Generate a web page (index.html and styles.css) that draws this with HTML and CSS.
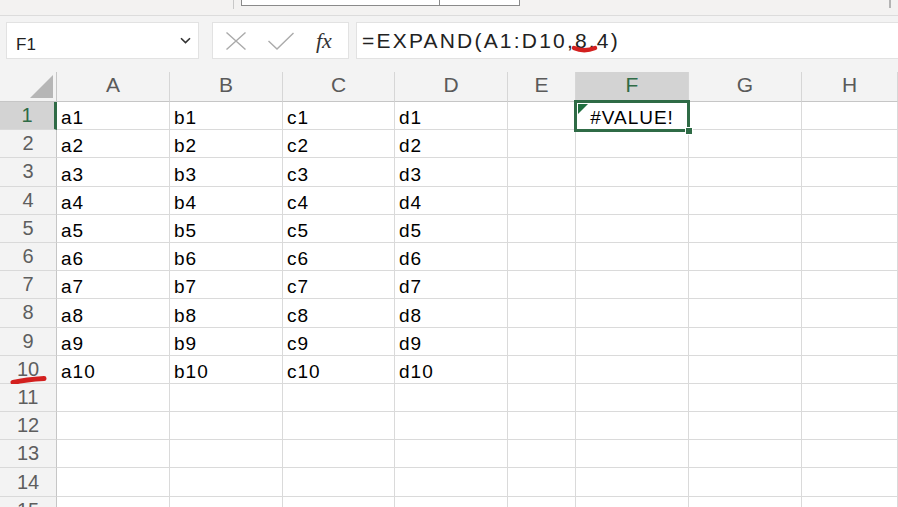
FILE: index.html
```html
<!DOCTYPE html>
<html lang="ja">
<head>
    <meta charset="UTF-8">
    <meta name="viewport" content="width=device-width, initial-scale=1.0">
    <title>EXPAND - Book1</title>
    <link rel="stylesheet" href="styles.css">
</head>
<body>
    <!-- リボン下端 -->
    <div class="strip">
        <div class="strip-sep"></div>
        <div class="search-box"><div class="search-left"></div></div>
        <div class="strip-end"></div>
    </div>

    <!-- 数式バー -->
    <div class="formula-bar">
        <div class="name-box">
            <span>F1</span>
            <svg class="chevron" width="11" height="7" viewBox="0 0 11 7"><path d="M1 1.2 L5.5 5.6 L10 1.2" fill="none" stroke="#333" stroke-width="1.6"/></svg>
        </div>
        <div class="fx-box">
            <svg class="icon-x" width="20" height="18" viewBox="0 0 20 18"><path d="M0.5 0.5 L19.5 17.5 M19.5 0.5 L0.5 17.5" stroke="#ababab" stroke-width="1.4" fill="none"/></svg>
            <svg class="icon-check" width="26" height="18" viewBox="0 0 26 18"><path d="M0.5 9 L9 17 L25.5 1" stroke="#ababab" stroke-width="1.4" fill="none"/></svg>
            <span class="fx">fx</span>
        </div>
        <div class="formula">=EXPAND(A1:D10,<span class="mark">8<svg class="pen" width="28" height="10" viewBox="0 0 28 10"><path d="M3 3 Q 13 7.5 24 3" stroke="#d3201f" stroke-width="4.5" stroke-linecap="round" fill="none"/></svg></span>,4)</div>
    </div>

    <!-- シート -->
    <div class="sheet">
        <div class="row head">
            <div class="corner"><span class="tri"></span></div>
            <div class="col-head">A</div>
            <div class="col-head">B</div>
            <div class="col-head">C</div>
            <div class="col-head">D</div>
            <div class="col-head">E</div>
            <div class="col-head active">F</div>
            <div class="col-head">G</div>
            <div class="col-head">H</div>
        </div>
        <div class="row">
            <div class="row-head active">1</div>
            <div class="cell">a1</div><div class="cell">b1</div><div class="cell">c1</div><div class="cell">d1</div>
            <div class="cell"></div>
            <div class="cell error">
                <span class="err-tri"></span>#VALUE!
                <div class="selection"><span class="handle"></span></div>
            </div>
            <div class="cell"></div><div class="cell"></div>
        </div>
        <div class="row">
            <div class="row-head">2</div>
            <div class="cell">a2</div><div class="cell">b2</div><div class="cell">c2</div><div class="cell">d2</div>
            <div class="cell"></div><div class="cell"></div><div class="cell"></div><div class="cell"></div>
        </div>
        <div class="row">
            <div class="row-head">3</div>
            <div class="cell">a3</div><div class="cell">b3</div><div class="cell">c3</div><div class="cell">d3</div>
            <div class="cell"></div><div class="cell"></div><div class="cell"></div><div class="cell"></div>
        </div>
        <div class="row">
            <div class="row-head">4</div>
            <div class="cell">a4</div><div class="cell">b4</div><div class="cell">c4</div><div class="cell">d4</div>
            <div class="cell"></div><div class="cell"></div><div class="cell"></div><div class="cell"></div>
        </div>
        <div class="row">
            <div class="row-head">5</div>
            <div class="cell">a5</div><div class="cell">b5</div><div class="cell">c5</div><div class="cell">d5</div>
            <div class="cell"></div><div class="cell"></div><div class="cell"></div><div class="cell"></div>
        </div>
        <div class="row">
            <div class="row-head">6</div>
            <div class="cell">a6</div><div class="cell">b6</div><div class="cell">c6</div><div class="cell">d6</div>
            <div class="cell"></div><div class="cell"></div><div class="cell"></div><div class="cell"></div>
        </div>
        <div class="row">
            <div class="row-head">7</div>
            <div class="cell">a7</div><div class="cell">b7</div><div class="cell">c7</div><div class="cell">d7</div>
            <div class="cell"></div><div class="cell"></div><div class="cell"></div><div class="cell"></div>
        </div>
        <div class="row">
            <div class="row-head">8</div>
            <div class="cell">a8</div><div class="cell">b8</div><div class="cell">c8</div><div class="cell">d8</div>
            <div class="cell"></div><div class="cell"></div><div class="cell"></div><div class="cell"></div>
        </div>
        <div class="row">
            <div class="row-head">9</div>
            <div class="cell">a9</div><div class="cell">b9</div><div class="cell">c9</div><div class="cell">d9</div>
            <div class="cell"></div><div class="cell"></div><div class="cell"></div><div class="cell"></div>
        </div>
        <div class="row">
            <div class="row-head">10<svg class="pen-row" width="38" height="12" viewBox="0 0 38 12"><path d="M3 8.5 Q 16 5.5 34 4.5" stroke="#d3201f" stroke-width="5" stroke-linecap="round" fill="none"/></svg></div>
            <div class="cell">a10</div><div class="cell">b10</div><div class="cell">c10</div><div class="cell">d10</div>
            <div class="cell"></div><div class="cell"></div><div class="cell"></div><div class="cell"></div>
        </div>
        <div class="row">
            <div class="row-head">11</div>
            <div class="cell"></div><div class="cell"></div><div class="cell"></div><div class="cell"></div>
            <div class="cell"></div><div class="cell"></div><div class="cell"></div><div class="cell"></div>
        </div>
        <div class="row">
            <div class="row-head">12</div>
            <div class="cell"></div><div class="cell"></div><div class="cell"></div><div class="cell"></div>
            <div class="cell"></div><div class="cell"></div><div class="cell"></div><div class="cell"></div>
        </div>
        <div class="row">
            <div class="row-head">13</div>
            <div class="cell"></div><div class="cell"></div><div class="cell"></div><div class="cell"></div>
            <div class="cell"></div><div class="cell"></div><div class="cell"></div><div class="cell"></div>
        </div>
        <div class="row">
            <div class="row-head">14</div>
            <div class="cell"></div><div class="cell"></div><div class="cell"></div><div class="cell"></div>
            <div class="cell"></div><div class="cell"></div><div class="cell"></div><div class="cell"></div>
        </div>
        <div class="row">
            <div class="row-head">15</div>
            <div class="cell"></div><div class="cell"></div><div class="cell"></div><div class="cell"></div>
            <div class="cell"></div><div class="cell"></div><div class="cell"></div><div class="cell"></div>
        </div>
    </div>
</body>
</html>
```

FILE: styles.css
```css
* {
    box-sizing: border-box;
}
body {
    margin: 0;
    width: 898px;
    height: 507px;
    overflow: hidden;
    background: #fff;
    font-family: "Liberation Sans", Arial, "Noto Sans CJK JP", sans-serif;
    color: #000;
}

/* リボン下端 */
.strip {
    display: flex;
    align-items: flex-start;
    height: 16px;
    background: #f3f2f1;
    border-bottom: 1px solid #dcdcdc;
}
.strip-sep {
    margin-left: 233px;
    width: 1px;
    height: 9px;
    background: #c8c8c8;
}
.search-box {
    display: flex;
    margin-left: 7px;
    width: 279px;
    height: 6px;
    background: #fff;
    border: 1px solid #8a8a8a;
    border-top: none;
}
.search-left {
    width: 198px;
    border-right: 1px solid #8a8a8a;
}
.strip-end {
    margin-left: auto;
    margin-right: 7px;
    width: 2px;
    height: 8px;
    background: #b4b4b4;
}

/* 数式バー */
.formula-bar {
    display: flex;
    padding: 6px 0 13px 6px;
    background: #f3f3f3;
}
.name-box,
.fx-box,
.formula {
    height: 37px;
    background: #fff;
    border: 1px solid #e2e2e2;
}
.name-box {
    display: flex;
    align-items: center;
    justify-content: space-between;
    width: 193px;
    padding: 8px 7px 0 9px;
    font-size: 17px;
    color: #222;
}
.chevron {
    margin-top: -8px;
}
.fx-box {
    display: flex;
    align-items: center;
    width: 137px;
    margin-left: 13px;
    padding-left: 13px;
}
.icon-check {
    margin-left: 22px;
}
.fx {
    margin-left: 22px;
    font-family: "Liberation Serif", "Times New Roman", serif;
    font-style: italic;
    font-size: 22px;
    color: #333;
}
.formula {
    flex: 1;
    display: flex;
    align-items: center;
    margin-left: 7px;
    margin-right: -2px;
    padding-left: 5px;
    font-size: 21px;
    letter-spacing: 2.2px;
    color: #222;
}
.mark {
    position: relative;
}
.pen {
    position: absolute;
    left: -4px;
    top: 16px;
}

/* シート */
.row {
    display: grid;
    grid-template-columns: 57px 113px 113px 112px 113px 68px 113px 113px 1fr;
    height: 28.2px;
}
.row.head {
    height: 30px;
}
.corner,
.col-head,
.row-head {
    background: #f3f3f3;
    color: #5a5a5a;
    border-right: 1px solid #d6d6d6;
    border-bottom: 1px solid #c6c6c6;
}
.corner {
    position: relative;
    border-right-color: #c6c6c6;
}
.tri {
    position: absolute;
    right: 3px;
    bottom: 3px;
    width: 0;
    height: 0;
    border-left: 23px solid transparent;
    border-bottom: 23px solid #b6b6b6;
}
.col-head {
    display: flex;
    align-items: center;
    justify-content: center;
    padding-bottom: 3px;
    font-size: 21px;
}
.row-head {
    position: relative;
    display: flex;
    align-items: center;
    justify-content: center;
    font-size: 20px;
    color: #5e5e5e;
    border-right-color: #c6c6c6;
    border-bottom-color: #d9d9d9;
}
.col-head.active,
.row-head.active {
    background: #d3d3d3;
    color: #2f6b46;
}
.row-head.active {
    border-right: 3px solid #2f6b46;
}
.pen-row {
    position: absolute;
    left: 10px;
    top: 18px;
}
.cell {
    display: flex;
    align-items: flex-end;
    padding: 0 0 1px 4px;
    font-size: 19px;
    line-height: 20px;
    letter-spacing: 1px;
    border-right: 1px solid #dadada;
    border-bottom: 1px solid #dadada;
}
.cell.error {
    position: relative;
    justify-content: center;
    padding-left: 0;
}
.err-tri {
    position: absolute;
    left: 2px;
    top: 2px;
    width: 0;
    height: 0;
    border-top: 10px solid #1f6f3f;
    border-right: 10px solid transparent;
}
.selection {
    position: absolute;
    left: -2px;
    top: -2px;
    right: -2px;
    bottom: -3px;
    border: 3px solid #2f6b46;
}
.handle {
    position: absolute;
    right: -6px;
    bottom: -6px;
    width: 8px;
    height: 8px;
    background: #2f6b46;
    border: 1px solid #fff;
}
```
